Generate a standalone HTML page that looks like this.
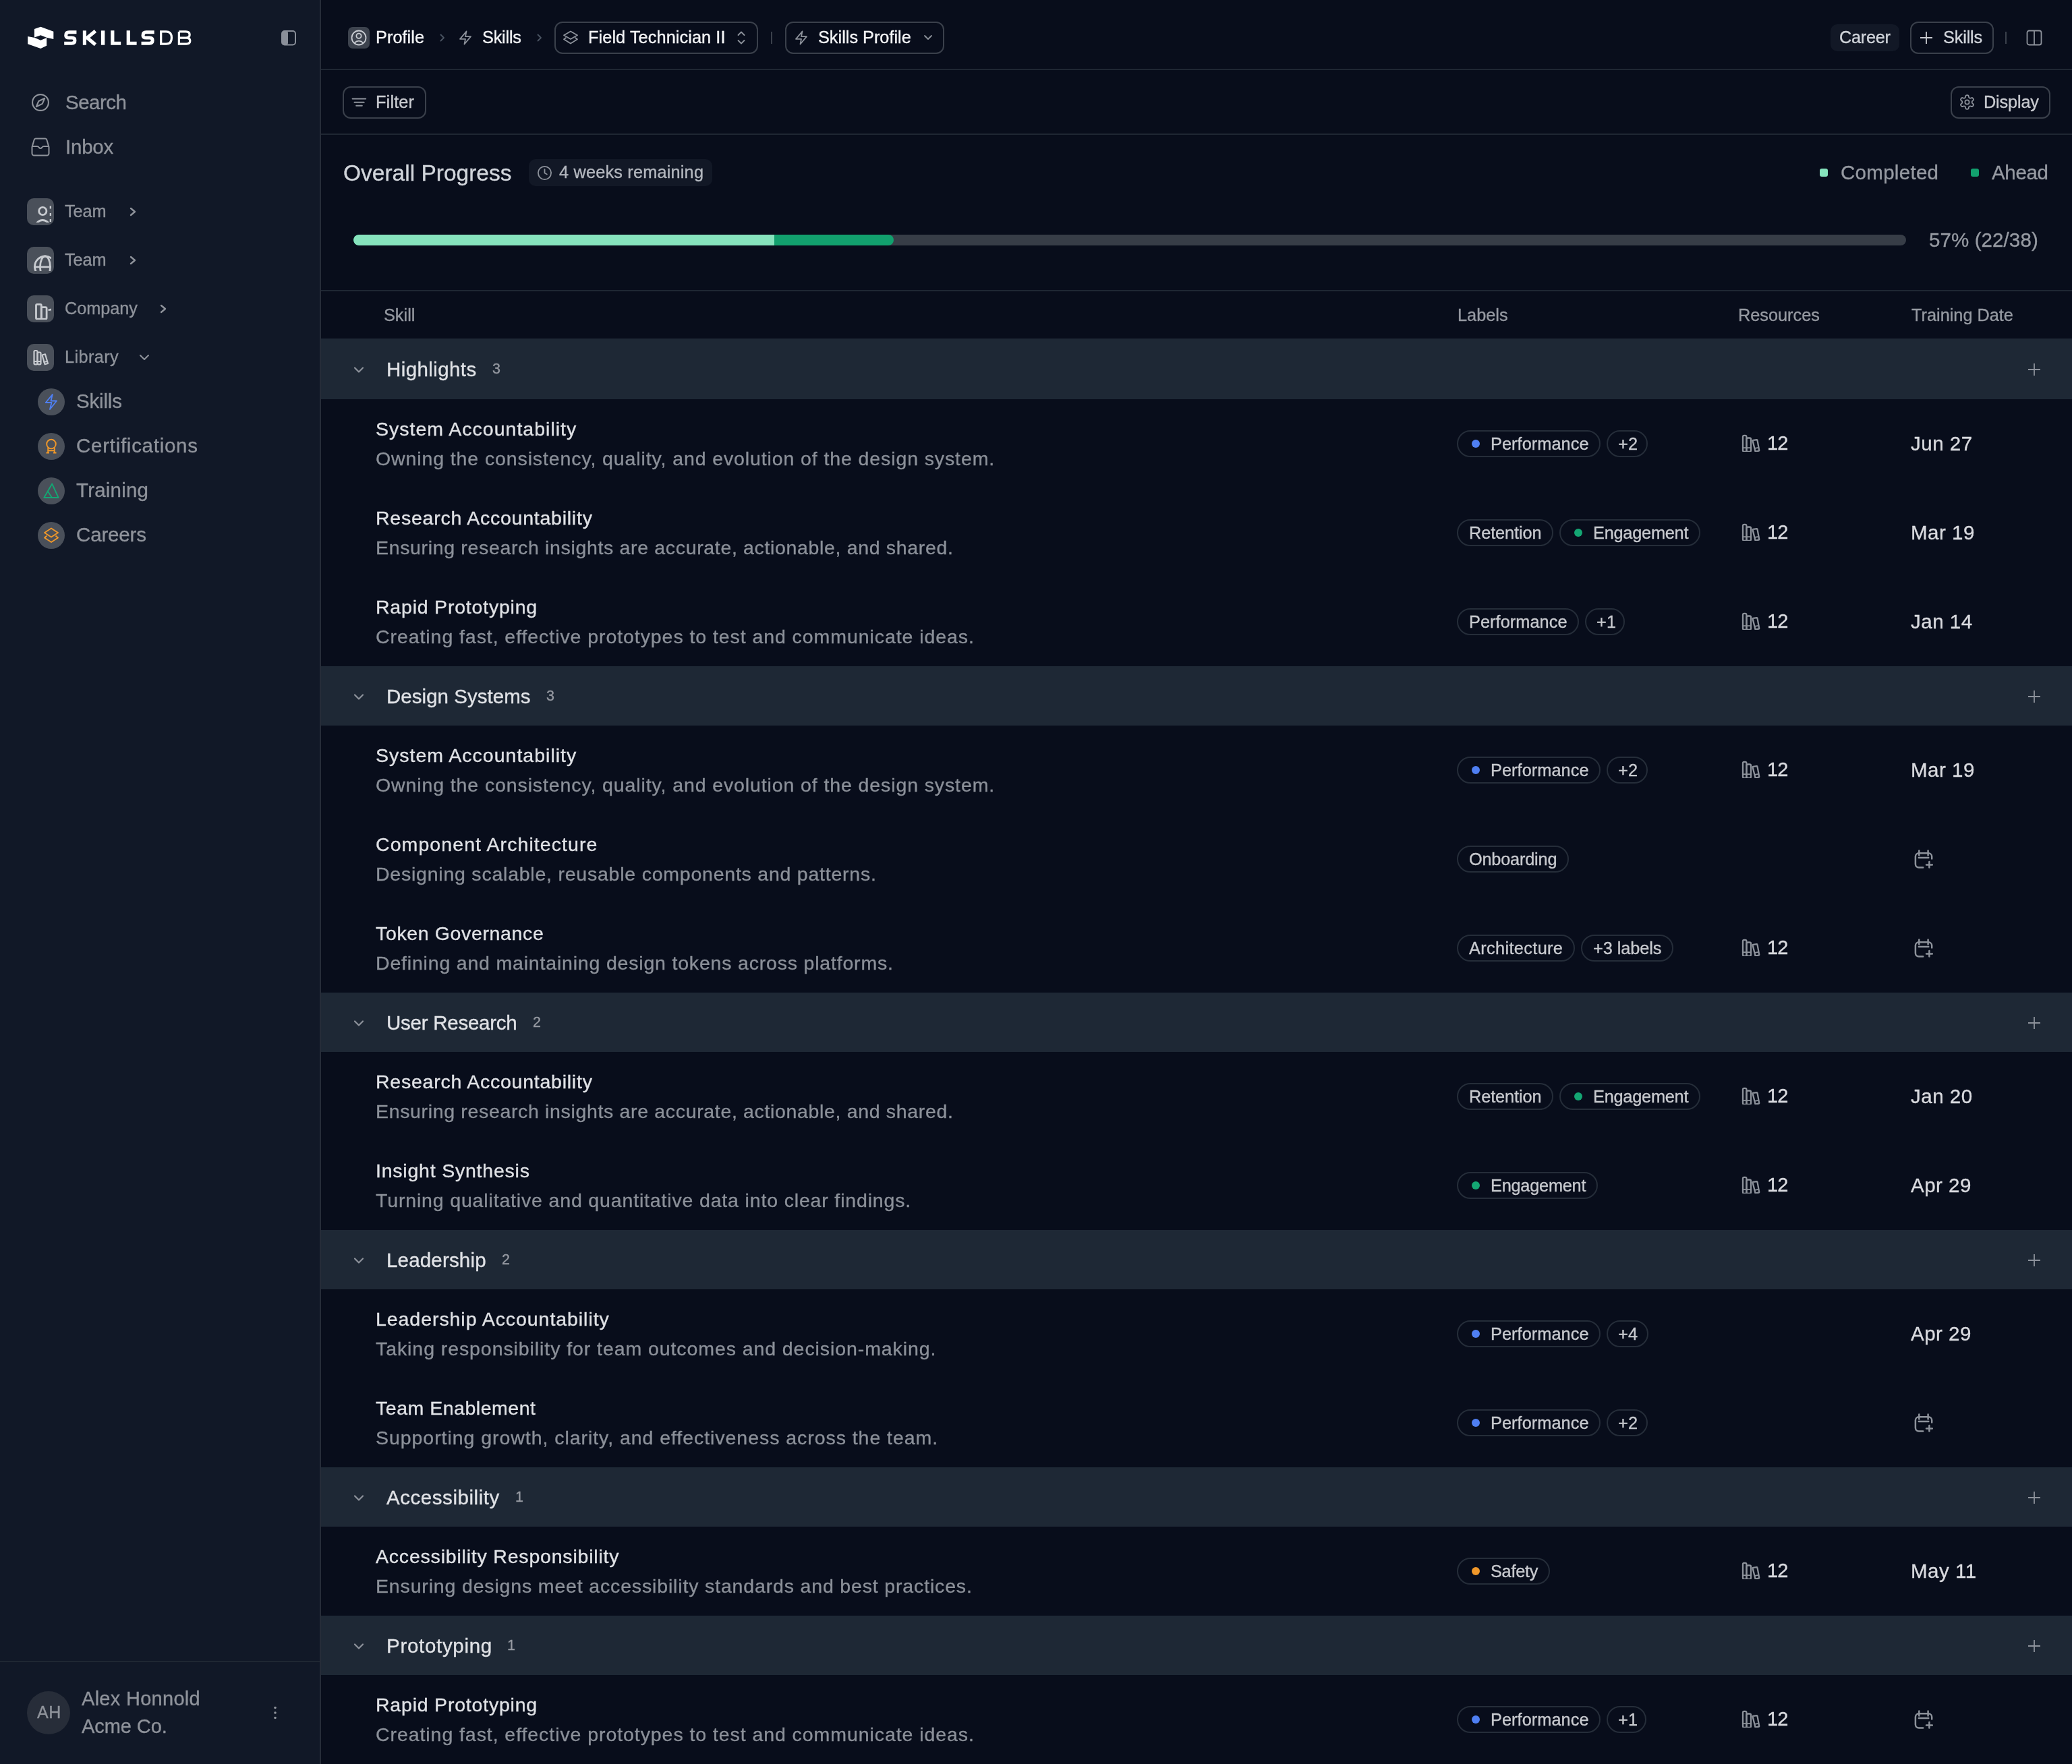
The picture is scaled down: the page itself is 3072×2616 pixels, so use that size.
<!DOCTYPE html>
<html><head><meta charset="utf-8">
<style>
*{box-sizing:border-box;margin:0;padding:0}
html,body{width:3072px;height:2616px;overflow:hidden;background:#080d1b;font-family:"Liberation Sans",sans-serif;}
.abs{position:absolute}
.t{position:absolute;white-space:nowrap;line-height:1;-webkit-text-stroke:0.35px currentColor;will-change:transform}
</style></head><body>
<div class="abs" style="left:0px;top:0px;width:474px;height:2616px;background:#111827"></div>
<div class="abs" style="left:474px;top:0px;width:2px;height:2616px;background:#262c38"></div>
<svg class="abs" style="left:30px;top:30px;" width="270" height="50" viewBox="0 0 2072 384" fill="none"><g fill="#ffffff"><path d="M160,100 L232,75 L378,128 L378,215 L300,198 L232,170 L160,195 Z"/><path d="M85,185 L165,200 L232,228 L300,200 L300,290 L232,322 L85,270 Z"/></g><g stroke="#ffffff" fill="none" stroke-linejoin="miter"><path stroke-width="38" d="M640,137 H555 Q519,137 519,172 Q519,200 555,200 H585 Q621,200 621,230 Q621,263 585,263 H500"/><path stroke-width="38" d="M1525,137 H1433 Q1397,137 1397,172 Q1397,200 1433,200 H1470 Q1506,200 1506,230 Q1506,263 1470,263 H1378"/><path stroke-width="40" d="M732,118 V282"/><path stroke-width="40" d="M855,122 L762,200 L855,278"/><path stroke-width="42" d="M941,118 V282"/><path stroke-width="40" d="M1050,118 V263 H1145"/><path stroke-width="40" d="M1230,118 V263 H1325"/><path stroke-width="25" d="M1602,130 H1660 Q1723,130 1723,200 Q1723,270 1660,270 H1602 Z"/><path stroke-width="25" d="M1807,130 H1885 Q1928,130 1928,165 Q1928,200 1885,200 H1807 M1807,200 H1890 Q1933,200 1933,235 Q1933,270 1890,270 H1807 V130"/></g></svg>
<svg class="abs" style="left:416px;top:44px;" width="24" height="24" viewBox="0 0 24 24" fill="none"><rect x="2" y="2" width="20" height="20.5" rx="4" stroke="#8a8f99" stroke-width="2"/><rect x="2" y="2" width="9" height="20.5" rx="3" fill="#8a8f99"/></svg>
<svg class="abs" style="left:46px;top:138px;" width="28" height="28" viewBox="0 0 24 24" fill="none"><circle cx="12" cy="12" r="10.2" stroke="#8f939b" stroke-width="1.8"/><polygon points="17.3,6.7 14.4,13.6 6.7,17.3 9.7,10.3" stroke="#8f939b" stroke-width="1.8" stroke-linejoin="round"/></svg>
<div class="t" style="left:97.0px;top:137.2px;font-size:29.5px;color:#8f939b;letter-spacing:-0.49px;font-weight:400;">Search</div>
<svg class="abs" style="left:46px;top:204px;" width="28" height="28" viewBox="0 0 28 28" fill="none"><path d="M1.5,14 V23.5 a3,3 0 0 0 3,3 H23.5 a3,3 0 0 0 3,-3 V14 L23.3,3.3 a2.5,2.5 0 0 0 -2.3,-1.8 H7 a2.5,2.5 0 0 0 -2.3,1.8 Z" stroke="#8f939b" stroke-width="2" stroke-linejoin="round"/><path d="M1.5,13 H9 Q11,13 12,15 Q14,17 16,15 Q17,13 19,13 H26.5" stroke="#8f939b" stroke-width="2"/></svg>
<div class="t" style="left:97.0px;top:203.2px;font-size:29.5px;color:#8f939b;letter-spacing:-0.22px;font-weight:400;">Inbox</div>
<div class="abs" style="left:40px;top:294px;width:40px;height:40px;border-radius:10px;background:#4a505a;"></div>
<svg class="abs" style="left:44px;top:298px" width="32" height="32" viewBox="4 4 32 32" fill="none"><circle cx="23.3" cy="19" r="5.6" stroke="#c8cbd0" stroke-width="2.8"/><path d="M14.5,36.5 Q23,28.5 32,36.5" stroke="#c8cbd0" stroke-width="2.8"/><path d="M35,11.5 V15.5 M35,22 V26 M35,31 V35" stroke="#c8cbd0" stroke-width="2.6"/></svg>
<div class="t" style="left:96.3px;top:300.5px;font-size:25.3px;color:#8f939b;letter-spacing:-0.12px;font-weight:400;">Team</div>
<svg class="abs" style="left:191px;top:307px;" width="12" height="14" viewBox="0 0 12 14" fill="none"><path d="M3,2 L9,7 L3,12" stroke="#8f939b" stroke-width="2.4" stroke-linecap="round" stroke-linejoin="round"/></svg>
<div class="abs" style="left:40px;top:366px;width:40px;height:40px;border-radius:10px;background:#4a505a;"></div>
<svg class="abs" style="left:44px;top:370px" width="32" height="32" viewBox="4 4 32 32" fill="none"><circle cx="27" cy="29.5" r="15.5" stroke="#c8cbd0" stroke-width="2.8"/><ellipse cx="27" cy="29.5" rx="7.5" ry="15.5" stroke="#c8cbd0" stroke-width="2.8"/><path d="M10,29.8 H44" stroke="#c8cbd0" stroke-width="2.8"/></svg>
<div class="t" style="left:96.3px;top:372.5px;font-size:25.3px;color:#8f939b;letter-spacing:-0.12px;font-weight:400;">Team</div>
<svg class="abs" style="left:191px;top:379px;" width="12" height="14" viewBox="0 0 12 14" fill="none"><path d="M3,2 L9,7 L3,12" stroke="#8f939b" stroke-width="2.4" stroke-linecap="round" stroke-linejoin="round"/></svg>
<div class="abs" style="left:40px;top:438px;width:40px;height:40px;border-radius:10px;background:#4a505a;"></div>
<svg class="abs" style="left:44px;top:442px" width="32" height="32" viewBox="4 4 32 32" fill="none"><rect x="13.5" y="13.3" width="7.8" height="21.8" rx="1.5" stroke="#c8cbd0" stroke-width="2.8"/><rect x="21.3" y="17.6" width="7.8" height="17.5" rx="1.5" stroke="#c8cbd0" stroke-width="2.8"/><path d="M31.5,22 L36.5,20.8 L41,38" stroke="#c8cbd0" stroke-width="2.8"/></svg>
<div class="t" style="left:96.3px;top:444.5px;font-size:25.3px;color:#8f939b;letter-spacing:-0.05px;font-weight:400;">Company</div>
<svg class="abs" style="left:236px;top:451px;" width="12" height="14" viewBox="0 0 12 14" fill="none"><path d="M3,2 L9,7 L3,12" stroke="#8f939b" stroke-width="2.4" stroke-linecap="round" stroke-linejoin="round"/></svg>
<div class="abs" style="left:40px;top:510px;width:40px;height:40px;border-radius:10px;background:#4a505a;"></div>
<svg class="abs" style="left:40px;top:510px" width="40" height="40" viewBox="0 0 40 40" fill="none"><rect x="10.5" y="10" width="5" height="20.3" rx="1.5" stroke="#c8cbd0" stroke-width="2.2"/><rect x="15.5" y="12.5" width="5" height="17.8" rx="1.5" stroke="#c8cbd0" stroke-width="2.2"/><path d="M22.5,16.5 L27,15.3 L31,29 L26.5,30.3 Z" stroke="#c8cbd0" stroke-width="2.2" stroke-linejoin="round"/><path d="M10.5,26 H20.5 M24.5,27.2 L30,25.8" stroke="#c8cbd0" stroke-width="1.8"/></svg>
<div class="t" style="left:96.3px;top:516.5px;font-size:25.3px;color:#8f939b;letter-spacing:0.38px;font-weight:400;">Library</div>
<svg class="abs" style="left:206px;top:525px;" width="16" height="10" viewBox="0 0 16 10" fill="none"><path d="M2,2 L8,8 L14,2" stroke="#8f939b" stroke-width="2" stroke-linecap="round" stroke-linejoin="round"/></svg>
<div class="abs" style="left:56px;top:576px;width:40px;height:40px;border-radius:20px;background:#4a505a;"><svg width="40" height="40" viewBox="0 0 40 40" fill="none" style="position:absolute;left:0;top:0"><path d="M21.8,9 L11.8,21 H20.5 L18,31 L28,18.5 H19.5 Z" stroke="#4f7ff2" stroke-width="1.9" stroke-linejoin="round"/></svg></div>
<div class="t" style="left:112.8px;top:580.4px;font-size:29.5px;color:#8f939b;letter-spacing:-0.17px;font-weight:400;">Skills</div>
<div class="abs" style="left:56px;top:642px;width:40px;height:40px;border-radius:20px;background:#4a505a;"><svg width="40" height="40" viewBox="0 0 40 40" fill="none" style="position:absolute;left:0;top:0"><circle cx="20" cy="16.6" r="6.8" stroke="#f0982a" stroke-width="1.9"/><path d="M15.2,22 V29.5 M24.8,22 V29.5 M15.2,26.2 H24.8 M12.5,29.5 H17 M23,29.5 H27.5" stroke="#f0982a" stroke-width="1.9"/></svg></div>
<div class="t" style="left:112.8px;top:646.4px;font-size:29.5px;color:#8f939b;letter-spacing:0.73px;font-weight:400;">Certifications</div>
<div class="abs" style="left:56px;top:708px;width:40px;height:40px;border-radius:20px;background:#4a505a;"><svg width="40" height="40" viewBox="0 0 40 40" fill="none" style="position:absolute;left:0;top:0"><path d="M9.3,30 L21.2,9.5 L30.6,30 Z M14.8,20.6 L21,30" stroke="#14a673" stroke-width="1.9" stroke-linejoin="round"/></svg></div>
<div class="t" style="left:112.8px;top:712.4px;font-size:29.5px;color:#8f939b;letter-spacing:0.22px;font-weight:400;">Training</div>
<div class="abs" style="left:56px;top:774px;width:40px;height:40px;border-radius:20px;background:#4a505a;"><svg width="40" height="40" viewBox="0 0 40 40" fill="none" style="position:absolute;left:0;top:0"><path d="M20,9.5 L30,16 L20,22.5 L10,16 Z" stroke="#f0982a" stroke-width="1.9" stroke-linejoin="round"/><path d="M13.5,20.5 L10,23.5 L20,30 L30,23.5 L26.5,20.5" stroke="#f0982a" stroke-width="1.9" stroke-linejoin="round"/></svg></div>
<div class="t" style="left:112.8px;top:778.4px;font-size:29.5px;color:#8f939b;letter-spacing:-0.15px;font-weight:400;">Careers</div>
<div class="abs" style="left:0px;top:2463px;width:474px;height:2px;background:#1f2733"></div>
<div class="abs" style="left:40px;top:2508px;width:64px;height:64px;border-radius:32px;background:#272d39"></div>
<div class="t" style="left:54.6px;top:2526.8px;font-size:25px;color:#8f939b;letter-spacing:0.50px;font-weight:400;">AH</div>
<div class="t" style="left:121.2px;top:2505.3px;font-size:29px;color:#8f939b;letter-spacing:0.29px;font-weight:400;">Alex Honnold</div>
<div class="t" style="left:121.2px;top:2546.3px;font-size:29px;color:#8f939b;letter-spacing:-0.07px;font-weight:400;">Acme Co.</div>
<svg class="abs" style="left:402px;top:2528px;" width="12" height="24" viewBox="0 0 12 24" fill="none"><circle cx="6" cy="4.5" r="1.8" fill="#8f939b"/><circle cx="6" cy="12" r="1.8" fill="#8f939b"/><circle cx="6" cy="19.5" r="1.8" fill="#8f939b"/></svg>
<div class="abs" style="left:476px;top:102px;width:2596px;height:2px;background:#1f2733"></div>
<div class="abs" style="left:476px;top:198px;width:2596px;height:2px;background:#1f2733"></div>
<div class="abs" style="left:516px;top:40px;width:32px;height:32px;border-radius:7px;background:#3d434e"></div>
<svg class="abs" style="left:516px;top:40px;" width="32" height="32" viewBox="0 0 32 32" fill="none"><circle cx="16" cy="16" r="10.5" stroke="#c9ccd2" stroke-width="1.8"/><circle cx="16" cy="13.3" r="3.6" stroke="#c9ccd2" stroke-width="1.8"/><path d="M9.2,23.8 Q16,17.5 22.8,23.8" stroke="#c9ccd2" stroke-width="1.8"/></svg>
<div class="t" style="left:556.8px;top:42.5px;font-size:25.3px;color:#f3f4f6;letter-spacing:0.05px;font-weight:400;">Profile</div>
<svg class="abs" style="left:651px;top:49px;" width="10" height="14" viewBox="0 0 10 14" fill="none"><path d="M2.5,2.5 L7,7 L2.5,11.5" stroke="#4b5563" stroke-width="1.8" stroke-linecap="round" stroke-linejoin="round"/></svg>
<svg class="abs" style="left:678px;top:44px;" width="24" height="24" viewBox="0 0 24 24" fill="none"><path d="M13.5,2.5 L4,13.8 H12 L10.5,21.5 L20,10.2 H12 Z" stroke="#8d929b" stroke-width="1.8" stroke-linejoin="round"/></svg>
<div class="t" style="left:715.0px;top:42.5px;font-size:25.3px;color:#f3f4f6;letter-spacing:-0.21px;font-weight:400;">Skills</div>
<svg class="abs" style="left:795px;top:49px;" width="10" height="14" viewBox="0 0 10 14" fill="none"><path d="M2.5,2.5 L7,7 L2.5,11.5" stroke="#4b5563" stroke-width="1.8" stroke-linecap="round" stroke-linejoin="round"/></svg>
<div class="abs" style="left:822px;top:32px;width:302px;height:48px;border-radius:12px;border:2px solid #3a404b"></div>
<svg class="abs" style="left:834px;top:44px;" width="24" height="24" viewBox="0 0 24 24" fill="none"><path d="M12,2.5 L22,8.3 L12,14 L2,8.3 Z" stroke="#8d929b" stroke-width="1.8" stroke-linejoin="round"/><path d="M5.5,11.8 L2,14.2 L12,20.5 L22,14.2 L18.5,11.8" stroke="#8d929b" stroke-width="1.8" stroke-linejoin="round"/></svg>
<div class="t" style="left:871.5px;top:42.5px;font-size:25.3px;color:#f3f4f6;letter-spacing:0.08px;font-weight:400;">Field Technician II</div>
<svg class="abs" style="left:1090px;top:43px;" width="18" height="26" viewBox="0 0 18 26" fill="none"><path d="M4.5,9 L9,4.5 L13.5,9 M4.5,17 L9,21.5 L13.5,17" stroke="#8d929b" stroke-width="1.8" stroke-linecap="round" stroke-linejoin="round"/></svg>
<div class="abs" style="left:1143px;top:47px;width:2px;height:18px;background:#3a404b"></div>
<div class="abs" style="left:1164px;top:32px;width:236px;height:48px;border-radius:12px;border:2px solid #3a404b"></div>
<svg class="abs" style="left:1176px;top:44px;" width="24" height="24" viewBox="0 0 24 24" fill="none"><path d="M13.5,2.5 L4,13.8 H12 L10.5,21.5 L20,10.2 H12 Z" stroke="#8d929b" stroke-width="1.8" stroke-linejoin="round"/></svg>
<div class="t" style="left:1213.2px;top:42.5px;font-size:25.3px;color:#f3f4f6;letter-spacing:0.00px;font-weight:400;">Skills Profile</div>
<svg class="abs" style="left:1368px;top:50px;" width="16" height="12" viewBox="0 0 16 12" fill="none"><path d="M3,3 L8,8 L13,3" stroke="#8d929b" stroke-width="1.8" stroke-linecap="round" stroke-linejoin="round"/></svg>
<div class="abs" style="left:2714px;top:36px;width:102px;height:40px;border-radius:10px;background:#121826"></div>
<div class="t" style="left:2727.0px;top:42.5px;font-size:25.3px;color:#d1d5db;letter-spacing:-0.27px;font-weight:400;">Career</div>
<div class="abs" style="left:2832px;top:32px;width:124px;height:48px;border-radius:12px;border:2px solid #3a404b"></div>
<svg class="abs" style="left:2844px;top:44px;" width="24" height="24" viewBox="0 0 24 24" fill="none"><path d="M12,3 V21 M3,12 H21" stroke="#c9ccd2" stroke-width="1.8"/></svg>
<div class="t" style="left:2880.8px;top:42.5px;font-size:25.3px;color:#d1d5db;letter-spacing:-0.17px;font-weight:400;">Skills</div>
<div class="abs" style="left:2973px;top:47px;width:2px;height:18px;background:#3a404b"></div>
<svg class="abs" style="left:3004px;top:44px;" width="24" height="24" viewBox="0 0 24 24" fill="none"><rect x="1.5" y="1.5" width="21" height="21" rx="3" stroke="#8d929b" stroke-width="1.8"/><path d="M12,2 V22" stroke="#8d929b" stroke-width="1.8"/></svg>
<div class="abs" style="left:508px;top:128px;width:124px;height:48px;border-radius:12px;border:2px solid #3a404b"></div>
<svg class="abs" style="left:516px;top:140px;" width="30" height="20" viewBox="0 0 30 20" fill="none"><path d="M6.6,6.4 H26.2 M9.5,11.8 H23.7 M12.2,16.8 H20.8" stroke="#8d929b" stroke-width="2" stroke-linecap="round"/></svg>
<div class="t" style="left:557.3px;top:138.5px;font-size:25.3px;color:#c9cbd0;letter-spacing:0.16px;font-weight:400;">Filter</div>
<div class="abs" style="left:2892px;top:128px;width:148px;height:48px;border-radius:12px;border:2px solid #3a404b"></div>
<svg class="abs" style="left:2904px;top:139px;" width="25" height="25" viewBox="0 0 24 24" fill="none"><path d="M12.22 2h-.44a2 2 0 0 0-2 2v.18a2 2 0 0 1-1 1.73l-.43.25a2 2 0 0 1-2 0l-.15-.08a2 2 0 0 0-2.73.73l-.22.38a2 2 0 0 0 .73 2.73l.15.1a2 2 0 0 1 1 1.72v.51a2 2 0 0 1-1 1.74l-.15.09a2 2 0 0 0-.73 2.73l.22.38a2 2 0 0 0 2.73.73l.15-.08a2 2 0 0 1 2 0l.43.25a2 2 0 0 1 1 1.73V20a2 2 0 0 0 2 2h.44a2 2 0 0 0 2-2v-.18a2 2 0 0 1 1-1.73l.43-.25a2 2 0 0 1 2 0l.15.08a2 2 0 0 0 2.73-.73l.22-.39a2 2 0 0 0-.73-2.73l-.15-.08a2 2 0 0 1-1-1.74v-.5a2 2 0 0 1 1-1.74l.15-.09a2 2 0 0 0 .73-2.73l-.22-.38a2 2 0 0 0-2.73-.73l-.15.08a2 2 0 0 1-2 0l-.43-.25a2 2 0 0 1-1-1.73V4a2 2 0 0 0-2-2z" stroke="#8d929b" stroke-width="1.7"/><circle cx="12" cy="12" r="3" stroke="#8d929b" stroke-width="1.7"/></svg>
<div class="t" style="left:2941.0px;top:138.5px;font-size:25.3px;color:#c9cbd0;letter-spacing:-0.16px;font-weight:400;">Display</div>
<div class="t" style="left:509.0px;top:240.2px;font-size:33.5px;color:#d1d5db;letter-spacing:0.00px;font-weight:400;">Overall Progress</div>
<div class="abs" style="left:784px;top:236px;width:272px;height:40px;border-radius:10px;background:#121826"></div>
<svg class="abs" style="left:796px;top:245px;" width="23" height="23" viewBox="0 0 24 24" fill="none"><circle cx="12" cy="12" r="10" stroke="#8d929b" stroke-width="1.9"/><path d="M12,6.5 V12 L15.5,14" stroke="#8d929b" stroke-width="1.9" stroke-linecap="round"/></svg>
<div class="t" style="left:829.0px;top:242.7px;font-size:25.3px;color:#b4b8bf;letter-spacing:0.19px;font-weight:400;">4 weeks remaining</div>
<div class="abs" style="left:2698px;top:250px;width:12px;height:12px;border-radius:3px;background:#86e3bd"></div>
<div class="t" style="left:2729.0px;top:240.9px;font-size:29.5px;color:#969aa2;letter-spacing:0.29px;font-weight:400;">Completed</div>
<div class="abs" style="left:2922px;top:250px;width:12px;height:12px;border-radius:3px;background:#12a06e"></div>
<div class="t" style="left:2953.0px;top:240.9px;font-size:29.5px;color:#969aa2;letter-spacing:-0.33px;font-weight:400;">Ahead</div>
<div class="abs" style="left:524px;top:348px;width:2302px;height:16px;border-radius:8px;background:#373d47;overflow:hidden"><div class="abs" style="left:0;top:0;width:801px;height:16px;border-radius:8px;background:#12a06e"></div><div class="abs" style="left:0;top:0;width:624px;height:16px;background:#86e3bd;border-radius:8px 0 0 8px"></div></div>
<div class="t" style="left:2859.7px;top:341.2px;font-size:29.5px;color:#969aa2;letter-spacing:0.10px;font-weight:400;">57% (22/38)</div>
<div class="abs" style="left:476px;top:430px;width:2596px;height:2px;background:#1f2733"></div>
<div class="t" style="left:569.0px;top:454.5px;font-size:25.3px;color:#969aa2;letter-spacing:0.00px;font-weight:400;">Skill</div>
<div class="t" style="left:2160.5px;top:454.5px;font-size:25.3px;color:#969aa2;letter-spacing:0.00px;font-weight:400;">Labels</div>
<div class="t" style="left:2577.0px;top:454.5px;font-size:25.3px;color:#969aa2;letter-spacing:0.00px;font-weight:400;">Resources</div>
<div class="t" style="left:2833.5px;top:454.5px;font-size:25.3px;color:#969aa2;letter-spacing:0.00px;font-weight:400;">Training Date</div>
<div class="abs" style="left:476px;top:502px;width:2596px;height:90px;background:#1e2835"></div>
<svg class="abs" style="left:522px;top:541px;" width="20" height="16" viewBox="0 0 20 16" fill="none"><path d="M4,4.5 L10,10.5 L16,4.5" stroke="#8d929b" stroke-width="2.2" stroke-linecap="round" stroke-linejoin="round"/></svg>
<div class="t" style="left:573.0px;top:532.9px;font-size:29.5px;color:#e0e2e6;letter-spacing:0.40px;font-weight:400;">Highlights</div>
<div class="t" style="left:730.0px;top:537.2px;font-size:21.5px;color:#969aa2;letter-spacing:0.00px;font-weight:400;">3</div>
<svg class="abs" style="left:3004px;top:536px;" width="24" height="24" viewBox="0 0 24 24" fill="none"><path d="M12,3 V21 M3,12 H21" stroke="#8d929b" stroke-width="1.8"/></svg>
<div class="t" style="left:556.8px;top:621.7px;font-size:28.5px;color:#e0e2e6;letter-spacing:1.00px;font-weight:400;">System Accountability</div>
<div class="t" style="left:556.8px;top:665.6px;font-size:28.5px;color:#8b9099;letter-spacing:0.89px;font-weight:400;">Owning the consistency, quality, and evolution of the design system.</div>
<div class="abs" style="left:2160px;top:638px;width:213px;height:40px;border-radius:20px;border:2px solid #252d39"></div>
<div class="abs" style="left:2182px;top:652px;width:12px;height:12px;border-radius:6px;background:#4f7ff2"></div>
<div class="t" style="left:2210.0px;top:645.5px;font-size:25.3px;color:#c8cacf;letter-spacing:0.07px;font-weight:400;">Performance</div>
<div class="abs" style="left:2382px;top:638px;width:61px;height:40px;border-radius:20px;border:2px solid #252d39"></div>
<div class="t" style="left:2398.5px;top:645.5px;font-size:25.3px;color:#c8cacf;letter-spacing:0.30px;font-weight:400;">+2</div>
<svg class="abs" style="left:2582px;top:642px;" width="28" height="28" viewBox="0 0 28 28" fill="none"><rect x="2" y="3.8" width="5.4" height="24" rx="2" stroke="#8d929b" stroke-width="2.3"/><rect x="7.4" y="7.5" width="6.6" height="20.3" rx="2" stroke="#8d929b" stroke-width="2.3"/><path d="M16.6,11.8 Q16.4,10.9 17.3,10.8 L22.6,10.2 Q23.4,10.1 23.5,10.9 L26.2,25.6 Q26.3,26.5 25.5,26.6 L21.2,27.5 Q20.4,27.6 20.3,26.8 Z" stroke="#8d929b" stroke-width="2.3" stroke-linejoin="round"/><path d="M2,22.2 H14 M19.3,22.8 L25.3,21.8" stroke="#8d929b" stroke-width="1.8"/></svg>
<div class="t" style="left:2620.0px;top:643.2px;font-size:29px;color:#d9dadf;letter-spacing:-0.80px;font-weight:400;">12</div>
<div class="t" style="left:2833.2px;top:642.8px;font-size:29.5px;color:#d9dadf;letter-spacing:0.50px;font-weight:400;">Jun 27</div>
<div class="t" style="left:556.8px;top:753.7px;font-size:28.5px;color:#e0e2e6;letter-spacing:0.76px;font-weight:400;">Research Accountability</div>
<div class="t" style="left:556.8px;top:797.6px;font-size:28.5px;color:#8b9099;letter-spacing:0.66px;font-weight:400;">Ensuring research insights are accurate, actionable, and shared.</div>
<div class="abs" style="left:2160px;top:770px;width:143px;height:40px;border-radius:20px;border:2px solid #252d39"></div>
<div class="t" style="left:2178.0px;top:777.5px;font-size:25.3px;color:#c8cacf;letter-spacing:-0.10px;font-weight:400;">Retention</div>
<div class="abs" style="left:2312px;top:770px;width:209px;height:40px;border-radius:20px;border:2px solid #252d39"></div>
<div class="abs" style="left:2334px;top:784px;width:12px;height:12px;border-radius:6px;background:#14a673"></div>
<div class="t" style="left:2362.0px;top:777.5px;font-size:25.3px;color:#c8cacf;letter-spacing:-0.22px;font-weight:400;">Engagement</div>
<svg class="abs" style="left:2582px;top:774px;" width="28" height="28" viewBox="0 0 28 28" fill="none"><rect x="2" y="3.8" width="5.4" height="24" rx="2" stroke="#8d929b" stroke-width="2.3"/><rect x="7.4" y="7.5" width="6.6" height="20.3" rx="2" stroke="#8d929b" stroke-width="2.3"/><path d="M16.6,11.8 Q16.4,10.9 17.3,10.8 L22.6,10.2 Q23.4,10.1 23.5,10.9 L26.2,25.6 Q26.3,26.5 25.5,26.6 L21.2,27.5 Q20.4,27.6 20.3,26.8 Z" stroke="#8d929b" stroke-width="2.3" stroke-linejoin="round"/><path d="M2,22.2 H14 M19.3,22.8 L25.3,21.8" stroke="#8d929b" stroke-width="1.8"/></svg>
<div class="t" style="left:2620.0px;top:775.2px;font-size:29px;color:#d9dadf;letter-spacing:-0.80px;font-weight:400;">12</div>
<div class="t" style="left:2833.2px;top:774.8px;font-size:29.5px;color:#d9dadf;letter-spacing:0.50px;font-weight:400;">Mar 19</div>
<div class="t" style="left:556.8px;top:885.7px;font-size:28.5px;color:#e0e2e6;letter-spacing:0.79px;font-weight:400;">Rapid Prototyping</div>
<div class="t" style="left:556.8px;top:929.6px;font-size:28.5px;color:#8b9099;letter-spacing:0.93px;font-weight:400;">Creating fast, effective prototypes to test and communicate ideas.</div>
<div class="abs" style="left:2160px;top:902px;width:181px;height:40px;border-radius:20px;border:2px solid #252d39"></div>
<div class="t" style="left:2178.0px;top:909.5px;font-size:25.3px;color:#c8cacf;letter-spacing:0.07px;font-weight:400;">Performance</div>
<div class="abs" style="left:2350px;top:902px;width:59px;height:40px;border-radius:20px;border:2px solid #252d39"></div>
<div class="t" style="left:2366.5px;top:909.5px;font-size:25.3px;color:#c8cacf;letter-spacing:0.30px;font-weight:400;">+1</div>
<svg class="abs" style="left:2582px;top:906px;" width="28" height="28" viewBox="0 0 28 28" fill="none"><rect x="2" y="3.8" width="5.4" height="24" rx="2" stroke="#8d929b" stroke-width="2.3"/><rect x="7.4" y="7.5" width="6.6" height="20.3" rx="2" stroke="#8d929b" stroke-width="2.3"/><path d="M16.6,11.8 Q16.4,10.9 17.3,10.8 L22.6,10.2 Q23.4,10.1 23.5,10.9 L26.2,25.6 Q26.3,26.5 25.5,26.6 L21.2,27.5 Q20.4,27.6 20.3,26.8 Z" stroke="#8d929b" stroke-width="2.3" stroke-linejoin="round"/><path d="M2,22.2 H14 M19.3,22.8 L25.3,21.8" stroke="#8d929b" stroke-width="1.8"/></svg>
<div class="t" style="left:2620.0px;top:907.2px;font-size:29px;color:#d9dadf;letter-spacing:-0.80px;font-weight:400;">12</div>
<div class="t" style="left:2833.2px;top:906.8px;font-size:29.5px;color:#d9dadf;letter-spacing:0.50px;font-weight:400;">Jan 14</div>
<div class="abs" style="left:476px;top:988px;width:2596px;height:88px;background:#1e2835"></div>
<svg class="abs" style="left:522px;top:1026px;" width="20" height="16" viewBox="0 0 20 16" fill="none"><path d="M4,4.5 L10,10.5 L16,4.5" stroke="#8d929b" stroke-width="2.2" stroke-linecap="round" stroke-linejoin="round"/></svg>
<div class="t" style="left:573.0px;top:1017.9px;font-size:29.5px;color:#e0e2e6;letter-spacing:0.03px;font-weight:400;">Design Systems</div>
<div class="t" style="left:810.1px;top:1022.2px;font-size:21.5px;color:#969aa2;letter-spacing:0.00px;font-weight:400;">3</div>
<svg class="abs" style="left:3004px;top:1021px;" width="24" height="24" viewBox="0 0 24 24" fill="none"><path d="M12,3 V21 M3,12 H21" stroke="#8d929b" stroke-width="1.8"/></svg>
<div class="t" style="left:556.8px;top:1105.7px;font-size:28.5px;color:#e0e2e6;letter-spacing:1.00px;font-weight:400;">System Accountability</div>
<div class="t" style="left:556.8px;top:1149.6px;font-size:28.5px;color:#8b9099;letter-spacing:0.89px;font-weight:400;">Owning the consistency, quality, and evolution of the design system.</div>
<div class="abs" style="left:2160px;top:1122px;width:213px;height:40px;border-radius:20px;border:2px solid #252d39"></div>
<div class="abs" style="left:2182px;top:1136px;width:12px;height:12px;border-radius:6px;background:#4f7ff2"></div>
<div class="t" style="left:2210.0px;top:1129.5px;font-size:25.3px;color:#c8cacf;letter-spacing:0.07px;font-weight:400;">Performance</div>
<div class="abs" style="left:2382px;top:1122px;width:61px;height:40px;border-radius:20px;border:2px solid #252d39"></div>
<div class="t" style="left:2398.5px;top:1129.5px;font-size:25.3px;color:#c8cacf;letter-spacing:0.30px;font-weight:400;">+2</div>
<svg class="abs" style="left:2582px;top:1126px;" width="28" height="28" viewBox="0 0 28 28" fill="none"><rect x="2" y="3.8" width="5.4" height="24" rx="2" stroke="#8d929b" stroke-width="2.3"/><rect x="7.4" y="7.5" width="6.6" height="20.3" rx="2" stroke="#8d929b" stroke-width="2.3"/><path d="M16.6,11.8 Q16.4,10.9 17.3,10.8 L22.6,10.2 Q23.4,10.1 23.5,10.9 L26.2,25.6 Q26.3,26.5 25.5,26.6 L21.2,27.5 Q20.4,27.6 20.3,26.8 Z" stroke="#8d929b" stroke-width="2.3" stroke-linejoin="round"/><path d="M2,22.2 H14 M19.3,22.8 L25.3,21.8" stroke="#8d929b" stroke-width="1.8"/></svg>
<div class="t" style="left:2620.0px;top:1127.2px;font-size:29px;color:#d9dadf;letter-spacing:-0.80px;font-weight:400;">12</div>
<div class="t" style="left:2833.2px;top:1126.8px;font-size:29.5px;color:#d9dadf;letter-spacing:0.50px;font-weight:400;">Mar 19</div>
<div class="t" style="left:556.8px;top:1237.7px;font-size:28.5px;color:#e0e2e6;letter-spacing:1.08px;font-weight:400;">Component Architecture</div>
<div class="t" style="left:556.8px;top:1281.6px;font-size:28.5px;color:#8b9099;letter-spacing:0.77px;font-weight:400;">Designing scalable, reusable components and patterns.</div>
<div class="abs" style="left:2160px;top:1254px;width:166px;height:40px;border-radius:20px;border:2px solid #252d39"></div>
<div class="t" style="left:2178.0px;top:1261.5px;font-size:25.3px;color:#c8cacf;letter-spacing:-0.19px;font-weight:400;">Onboarding</div>
<svg class="abs" style="left:2830px;top:1250px;" width="45" height="45" viewBox="0 0 45 45" fill="none"><path d="M21.2,36.6 H14.9 a5,5 0 0 1 -5,-5 V20.3 a5,5 0 0 1 5,-5 H29.2 a5,5 0 0 1 5,5 V23.4 M15.3,11.5 V18.5 M28.6,11.5 V18.5 M14.8,21.9 H29.3 M26,32.4 H34.8 M30.4,28 V36.6" stroke="#8d929b" stroke-width="2.5" stroke-linecap="round" stroke-linejoin="round"/></svg>
<div class="t" style="left:556.8px;top:1369.7px;font-size:28.5px;color:#e0e2e6;letter-spacing:0.64px;font-weight:400;">Token Governance</div>
<div class="t" style="left:556.8px;top:1413.6px;font-size:28.5px;color:#8b9099;letter-spacing:0.81px;font-weight:400;">Defining and maintaining design tokens across platforms.</div>
<div class="abs" style="left:2160px;top:1386px;width:174.5px;height:40px;border-radius:20px;border:2px solid #252d39"></div>
<div class="t" style="left:2178.0px;top:1393.5px;font-size:25.3px;color:#c8cacf;letter-spacing:0.36px;font-weight:400;">Architecture</div>
<div class="abs" style="left:2343.5px;top:1386px;width:137px;height:40px;border-radius:20px;border:2px solid #252d39"></div>
<div class="t" style="left:2361.5px;top:1393.5px;font-size:25.3px;color:#c8cacf;letter-spacing:-0.06px;font-weight:400;">+3 labels</div>
<svg class="abs" style="left:2582px;top:1390px;" width="28" height="28" viewBox="0 0 28 28" fill="none"><rect x="2" y="3.8" width="5.4" height="24" rx="2" stroke="#8d929b" stroke-width="2.3"/><rect x="7.4" y="7.5" width="6.6" height="20.3" rx="2" stroke="#8d929b" stroke-width="2.3"/><path d="M16.6,11.8 Q16.4,10.9 17.3,10.8 L22.6,10.2 Q23.4,10.1 23.5,10.9 L26.2,25.6 Q26.3,26.5 25.5,26.6 L21.2,27.5 Q20.4,27.6 20.3,26.8 Z" stroke="#8d929b" stroke-width="2.3" stroke-linejoin="round"/><path d="M2,22.2 H14 M19.3,22.8 L25.3,21.8" stroke="#8d929b" stroke-width="1.8"/></svg>
<div class="t" style="left:2620.0px;top:1391.2px;font-size:29px;color:#d9dadf;letter-spacing:-0.80px;font-weight:400;">12</div>
<svg class="abs" style="left:2830px;top:1382px;" width="45" height="45" viewBox="0 0 45 45" fill="none"><path d="M21.2,36.6 H14.9 a5,5 0 0 1 -5,-5 V20.3 a5,5 0 0 1 5,-5 H29.2 a5,5 0 0 1 5,5 V23.4 M15.3,11.5 V18.5 M28.6,11.5 V18.5 M14.8,21.9 H29.3 M26,32.4 H34.8 M30.4,28 V36.6" stroke="#8d929b" stroke-width="2.5" stroke-linecap="round" stroke-linejoin="round"/></svg>
<div class="abs" style="left:476px;top:1472px;width:2596px;height:88px;background:#1e2835"></div>
<svg class="abs" style="left:522px;top:1510px;" width="20" height="16" viewBox="0 0 20 16" fill="none"><path d="M4,4.5 L10,10.5 L16,4.5" stroke="#8d929b" stroke-width="2.2" stroke-linecap="round" stroke-linejoin="round"/></svg>
<div class="t" style="left:573.0px;top:1501.9px;font-size:29.5px;color:#e0e2e6;letter-spacing:-0.25px;font-weight:400;">User Research</div>
<div class="t" style="left:789.6px;top:1506.2px;font-size:21.5px;color:#969aa2;letter-spacing:0.00px;font-weight:400;">2</div>
<svg class="abs" style="left:3004px;top:1505px;" width="24" height="24" viewBox="0 0 24 24" fill="none"><path d="M12,3 V21 M3,12 H21" stroke="#8d929b" stroke-width="1.8"/></svg>
<div class="t" style="left:556.8px;top:1589.7px;font-size:28.5px;color:#e0e2e6;letter-spacing:0.76px;font-weight:400;">Research Accountability</div>
<div class="t" style="left:556.8px;top:1633.6px;font-size:28.5px;color:#8b9099;letter-spacing:0.66px;font-weight:400;">Ensuring research insights are accurate, actionable, and shared.</div>
<div class="abs" style="left:2160px;top:1606px;width:143px;height:40px;border-radius:20px;border:2px solid #252d39"></div>
<div class="t" style="left:2178.0px;top:1613.5px;font-size:25.3px;color:#c8cacf;letter-spacing:-0.10px;font-weight:400;">Retention</div>
<div class="abs" style="left:2312px;top:1606px;width:209px;height:40px;border-radius:20px;border:2px solid #252d39"></div>
<div class="abs" style="left:2334px;top:1620px;width:12px;height:12px;border-radius:6px;background:#14a673"></div>
<div class="t" style="left:2362.0px;top:1613.5px;font-size:25.3px;color:#c8cacf;letter-spacing:-0.22px;font-weight:400;">Engagement</div>
<svg class="abs" style="left:2582px;top:1610px;" width="28" height="28" viewBox="0 0 28 28" fill="none"><rect x="2" y="3.8" width="5.4" height="24" rx="2" stroke="#8d929b" stroke-width="2.3"/><rect x="7.4" y="7.5" width="6.6" height="20.3" rx="2" stroke="#8d929b" stroke-width="2.3"/><path d="M16.6,11.8 Q16.4,10.9 17.3,10.8 L22.6,10.2 Q23.4,10.1 23.5,10.9 L26.2,25.6 Q26.3,26.5 25.5,26.6 L21.2,27.5 Q20.4,27.6 20.3,26.8 Z" stroke="#8d929b" stroke-width="2.3" stroke-linejoin="round"/><path d="M2,22.2 H14 M19.3,22.8 L25.3,21.8" stroke="#8d929b" stroke-width="1.8"/></svg>
<div class="t" style="left:2620.0px;top:1611.2px;font-size:29px;color:#d9dadf;letter-spacing:-0.80px;font-weight:400;">12</div>
<div class="t" style="left:2833.2px;top:1610.8px;font-size:29.5px;color:#d9dadf;letter-spacing:0.50px;font-weight:400;">Jan 20</div>
<div class="t" style="left:556.8px;top:1721.7px;font-size:28.5px;color:#e0e2e6;letter-spacing:0.78px;font-weight:400;">Insight Synthesis</div>
<div class="t" style="left:556.8px;top:1765.6px;font-size:28.5px;color:#8b9099;letter-spacing:0.84px;font-weight:400;">Turning qualitative and quantitative data into clear findings.</div>
<div class="abs" style="left:2160px;top:1738px;width:209px;height:40px;border-radius:20px;border:2px solid #252d39"></div>
<div class="abs" style="left:2182px;top:1752px;width:12px;height:12px;border-radius:6px;background:#14a673"></div>
<div class="t" style="left:2210.0px;top:1745.5px;font-size:25.3px;color:#c8cacf;letter-spacing:-0.22px;font-weight:400;">Engagement</div>
<svg class="abs" style="left:2582px;top:1742px;" width="28" height="28" viewBox="0 0 28 28" fill="none"><rect x="2" y="3.8" width="5.4" height="24" rx="2" stroke="#8d929b" stroke-width="2.3"/><rect x="7.4" y="7.5" width="6.6" height="20.3" rx="2" stroke="#8d929b" stroke-width="2.3"/><path d="M16.6,11.8 Q16.4,10.9 17.3,10.8 L22.6,10.2 Q23.4,10.1 23.5,10.9 L26.2,25.6 Q26.3,26.5 25.5,26.6 L21.2,27.5 Q20.4,27.6 20.3,26.8 Z" stroke="#8d929b" stroke-width="2.3" stroke-linejoin="round"/><path d="M2,22.2 H14 M19.3,22.8 L25.3,21.8" stroke="#8d929b" stroke-width="1.8"/></svg>
<div class="t" style="left:2620.0px;top:1743.2px;font-size:29px;color:#d9dadf;letter-spacing:-0.80px;font-weight:400;">12</div>
<div class="t" style="left:2833.2px;top:1742.8px;font-size:29.5px;color:#d9dadf;letter-spacing:0.50px;font-weight:400;">Apr 29</div>
<div class="abs" style="left:476px;top:1824px;width:2596px;height:88px;background:#1e2835"></div>
<svg class="abs" style="left:522px;top:1862px;" width="20" height="16" viewBox="0 0 20 16" fill="none"><path d="M4,4.5 L10,10.5 L16,4.5" stroke="#8d929b" stroke-width="2.2" stroke-linecap="round" stroke-linejoin="round"/></svg>
<div class="t" style="left:573.0px;top:1853.9px;font-size:29.5px;color:#e0e2e6;letter-spacing:0.18px;font-weight:400;">Leadership</div>
<div class="t" style="left:744.0px;top:1858.2px;font-size:21.5px;color:#969aa2;letter-spacing:0.00px;font-weight:400;">2</div>
<svg class="abs" style="left:3004px;top:1857px;" width="24" height="24" viewBox="0 0 24 24" fill="none"><path d="M12,3 V21 M3,12 H21" stroke="#8d929b" stroke-width="1.8"/></svg>
<div class="t" style="left:556.8px;top:1941.7px;font-size:28.5px;color:#e0e2e6;letter-spacing:0.94px;font-weight:400;">Leadership Accountability</div>
<div class="t" style="left:556.8px;top:1985.6px;font-size:28.5px;color:#8b9099;letter-spacing:0.92px;font-weight:400;">Taking responsibility for team outcomes and decision-making.</div>
<div class="abs" style="left:2160px;top:1958px;width:213px;height:40px;border-radius:20px;border:2px solid #252d39"></div>
<div class="abs" style="left:2182px;top:1972px;width:12px;height:12px;border-radius:6px;background:#4f7ff2"></div>
<div class="t" style="left:2210.0px;top:1965.5px;font-size:25.3px;color:#c8cacf;letter-spacing:0.07px;font-weight:400;">Performance</div>
<div class="abs" style="left:2382px;top:1958px;width:62px;height:40px;border-radius:20px;border:2px solid #252d39"></div>
<div class="t" style="left:2398.5px;top:1965.5px;font-size:25.3px;color:#c8cacf;letter-spacing:0.30px;font-weight:400;">+4</div>
<div class="t" style="left:2833.2px;top:1962.8px;font-size:29.5px;color:#d9dadf;letter-spacing:0.50px;font-weight:400;">Apr 29</div>
<div class="t" style="left:556.8px;top:2073.7px;font-size:28.5px;color:#e0e2e6;letter-spacing:0.52px;font-weight:400;">Team Enablement</div>
<div class="t" style="left:556.8px;top:2117.6px;font-size:28.5px;color:#8b9099;letter-spacing:0.95px;font-weight:400;">Supporting growth, clarity, and effectiveness across the team.</div>
<div class="abs" style="left:2160px;top:2090px;width:213px;height:40px;border-radius:20px;border:2px solid #252d39"></div>
<div class="abs" style="left:2182px;top:2104px;width:12px;height:12px;border-radius:6px;background:#4f7ff2"></div>
<div class="t" style="left:2210.0px;top:2097.5px;font-size:25.3px;color:#c8cacf;letter-spacing:0.07px;font-weight:400;">Performance</div>
<div class="abs" style="left:2382px;top:2090px;width:61px;height:40px;border-radius:20px;border:2px solid #252d39"></div>
<div class="t" style="left:2398.5px;top:2097.5px;font-size:25.3px;color:#c8cacf;letter-spacing:0.30px;font-weight:400;">+2</div>
<svg class="abs" style="left:2830px;top:2086px;" width="45" height="45" viewBox="0 0 45 45" fill="none"><path d="M21.2,36.6 H14.9 a5,5 0 0 1 -5,-5 V20.3 a5,5 0 0 1 5,-5 H29.2 a5,5 0 0 1 5,5 V23.4 M15.3,11.5 V18.5 M28.6,11.5 V18.5 M14.8,21.9 H29.3 M26,32.4 H34.8 M30.4,28 V36.6" stroke="#8d929b" stroke-width="2.5" stroke-linecap="round" stroke-linejoin="round"/></svg>
<div class="abs" style="left:476px;top:2176px;width:2596px;height:88px;background:#1e2835"></div>
<svg class="abs" style="left:522px;top:2214px;" width="20" height="16" viewBox="0 0 20 16" fill="none"><path d="M4,4.5 L10,10.5 L16,4.5" stroke="#8d929b" stroke-width="2.2" stroke-linecap="round" stroke-linejoin="round"/></svg>
<div class="t" style="left:573.0px;top:2205.9px;font-size:29.5px;color:#e0e2e6;letter-spacing:0.55px;font-weight:400;">Accessibility</div>
<div class="t" style="left:764.4px;top:2210.2px;font-size:21.5px;color:#969aa2;letter-spacing:0.00px;font-weight:400;">1</div>
<svg class="abs" style="left:3004px;top:2209px;" width="24" height="24" viewBox="0 0 24 24" fill="none"><path d="M12,3 V21 M3,12 H21" stroke="#8d929b" stroke-width="1.8"/></svg>
<div class="t" style="left:556.8px;top:2293.7px;font-size:28.5px;color:#e0e2e6;letter-spacing:0.80px;font-weight:400;">Accessibility Responsibility</div>
<div class="t" style="left:556.8px;top:2337.6px;font-size:28.5px;color:#8b9099;letter-spacing:0.84px;font-weight:400;">Ensuring designs meet accessibility standards and best practices.</div>
<div class="abs" style="left:2160px;top:2310px;width:138px;height:40px;border-radius:20px;border:2px solid #252d39"></div>
<div class="abs" style="left:2182px;top:2324px;width:12px;height:12px;border-radius:6px;background:#f0982a"></div>
<div class="t" style="left:2210.0px;top:2317.5px;font-size:25.3px;color:#c8cacf;letter-spacing:-0.25px;font-weight:400;">Safety</div>
<svg class="abs" style="left:2582px;top:2314px;" width="28" height="28" viewBox="0 0 28 28" fill="none"><rect x="2" y="3.8" width="5.4" height="24" rx="2" stroke="#8d929b" stroke-width="2.3"/><rect x="7.4" y="7.5" width="6.6" height="20.3" rx="2" stroke="#8d929b" stroke-width="2.3"/><path d="M16.6,11.8 Q16.4,10.9 17.3,10.8 L22.6,10.2 Q23.4,10.1 23.5,10.9 L26.2,25.6 Q26.3,26.5 25.5,26.6 L21.2,27.5 Q20.4,27.6 20.3,26.8 Z" stroke="#8d929b" stroke-width="2.3" stroke-linejoin="round"/><path d="M2,22.2 H14 M19.3,22.8 L25.3,21.8" stroke="#8d929b" stroke-width="1.8"/></svg>
<div class="t" style="left:2620.0px;top:2315.2px;font-size:29px;color:#d9dadf;letter-spacing:-0.80px;font-weight:400;">12</div>
<div class="t" style="left:2833.2px;top:2314.8px;font-size:29.5px;color:#d9dadf;letter-spacing:0.50px;font-weight:400;">May 11</div>
<div class="abs" style="left:476px;top:2396px;width:2596px;height:88px;background:#1e2835"></div>
<svg class="abs" style="left:522px;top:2434px;" width="20" height="16" viewBox="0 0 20 16" fill="none"><path d="M4,4.5 L10,10.5 L16,4.5" stroke="#8d929b" stroke-width="2.2" stroke-linecap="round" stroke-linejoin="round"/></svg>
<div class="t" style="left:573.0px;top:2425.9px;font-size:29.5px;color:#e0e2e6;letter-spacing:0.70px;font-weight:400;">Prototyping</div>
<div class="t" style="left:752.0px;top:2430.2px;font-size:21.5px;color:#969aa2;letter-spacing:0.00px;font-weight:400;">1</div>
<svg class="abs" style="left:3004px;top:2429px;" width="24" height="24" viewBox="0 0 24 24" fill="none"><path d="M12,3 V21 M3,12 H21" stroke="#8d929b" stroke-width="1.8"/></svg>
<div class="t" style="left:556.8px;top:2513.7px;font-size:28.5px;color:#e0e2e6;letter-spacing:0.79px;font-weight:400;">Rapid Prototyping</div>
<div class="t" style="left:556.8px;top:2557.6px;font-size:28.5px;color:#8b9099;letter-spacing:0.93px;font-weight:400;">Creating fast, effective prototypes to test and communicate ideas.</div>
<div class="abs" style="left:2160px;top:2530px;width:213px;height:40px;border-radius:20px;border:2px solid #252d39"></div>
<div class="abs" style="left:2182px;top:2544px;width:12px;height:12px;border-radius:6px;background:#4f7ff2"></div>
<div class="t" style="left:2210.0px;top:2537.5px;font-size:25.3px;color:#c8cacf;letter-spacing:0.07px;font-weight:400;">Performance</div>
<div class="abs" style="left:2382px;top:2530px;width:59px;height:40px;border-radius:20px;border:2px solid #252d39"></div>
<div class="t" style="left:2398.5px;top:2537.5px;font-size:25.3px;color:#c8cacf;letter-spacing:0.30px;font-weight:400;">+1</div>
<svg class="abs" style="left:2582px;top:2534px;" width="28" height="28" viewBox="0 0 28 28" fill="none"><rect x="2" y="3.8" width="5.4" height="24" rx="2" stroke="#8d929b" stroke-width="2.3"/><rect x="7.4" y="7.5" width="6.6" height="20.3" rx="2" stroke="#8d929b" stroke-width="2.3"/><path d="M16.6,11.8 Q16.4,10.9 17.3,10.8 L22.6,10.2 Q23.4,10.1 23.5,10.9 L26.2,25.6 Q26.3,26.5 25.5,26.6 L21.2,27.5 Q20.4,27.6 20.3,26.8 Z" stroke="#8d929b" stroke-width="2.3" stroke-linejoin="round"/><path d="M2,22.2 H14 M19.3,22.8 L25.3,21.8" stroke="#8d929b" stroke-width="1.8"/></svg>
<div class="t" style="left:2620.0px;top:2535.2px;font-size:29px;color:#d9dadf;letter-spacing:-0.80px;font-weight:400;">12</div>
<svg class="abs" style="left:2830px;top:2526px;" width="45" height="45" viewBox="0 0 45 45" fill="none"><path d="M21.2,36.6 H14.9 a5,5 0 0 1 -5,-5 V20.3 a5,5 0 0 1 5,-5 H29.2 a5,5 0 0 1 5,5 V23.4 M15.3,11.5 V18.5 M28.6,11.5 V18.5 M14.8,21.9 H29.3 M26,32.4 H34.8 M30.4,28 V36.6" stroke="#8d929b" stroke-width="2.5" stroke-linecap="round" stroke-linejoin="round"/></svg>
</body></html>
